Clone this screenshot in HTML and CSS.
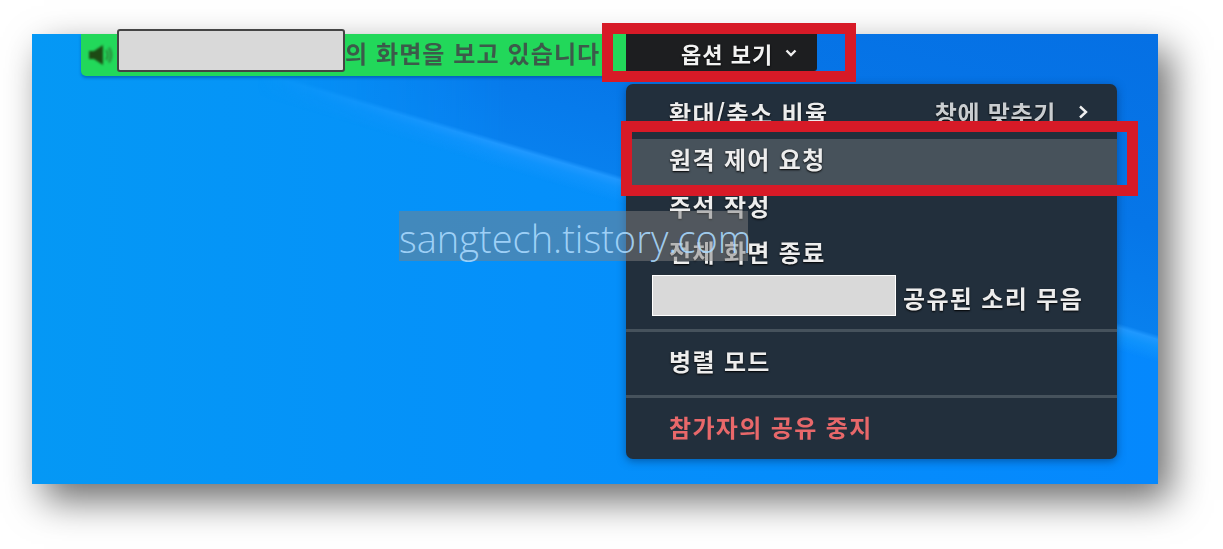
FILE: index.html
```html
<!DOCTYPE HTML>
<html lang="ko">
<head>
<meta charset="UTF-8">
<title>원격 제어 요청</title>
<link rel="stylesheet" href="styles.css">
</head>
<body>
<div class="desktop">
	<div class="topbar">
		<div class="share_bar">
			<svg class="speaker" viewBox="0 0 25 20" width="25" height="20">
				<path d="M1 6h5l9-6v20l-9-6H1z" fill="#1D4A14"/>
				<path d="M18 5c2 3 2 7 0 10M21 2.500c3 5 3 10 0 15" fill="none" stroke="#2A8A3C" stroke-width="2.200"/>
			</svg>
			<div class="mask mask_dark"></div>
			<span class="share_text">의 화면을 보고 있습니다</span>
		</div>
		<div class="view_btn">
			<span class="btn_text">옵션 보기</span>
			<svg class="btn_arrow" viewBox="0 0 12 8" width="12" height="8">
				<path d="M1.500 1.500 6 6l4.500-4.500" fill="none" stroke="#EEE" stroke-width="2.400"/>
			</svg>
		</div>
	</div>
	<ul class="menu">
		<li class="row">
			<span>확대/축소 비율</span>
			<span class="row_right">창에 맞추기
				<svg class="row_arrow" viewBox="0 0 10 14" width="10" height="14">
					<path d="M2 1.500 8 7l-6 5.500" fill="none" stroke="#F0F0F0" stroke-width="2.400"/>
				</svg>
			</span>
		</li>
		<li class="row row_on"><span>원격 제어 요청</span></li>
		<li class="row"><span>주석 작성</span></li>
		<li class="row"><span>전체 화면 종료</span></li>
		<li class="row row_mask">
			<div class="mask mask_light"></div>
			<span>공유된 소리 무음</span>
		</li>
		<li class="line"></li>
		<li class="row"><span>병렬 모드</span></li>
		<li class="line line_last"></li>
		<li class="row row_stop"><span>참가자의 공유 중지</span></li>
	</ul>
	<div class="frame frame_btn"></div>
	<div class="frame frame_row"></div>
	<div class="watermark">sangtech.tistory.com</div>
</div>
</body>
</html>
```

FILE: styles.css
```css
html, body, div, ul, li { margin:0; padding:0; }
ul li { list-style:none; }
body { width:1223px; height:549px; overflow:hidden; background:#FFF; font:bold 24px "Noto Sans CJK KR","Noto Sans",sans-serif; }

.desktop { position:relative; isolation:isolate; width:1126px; height:450px; margin:34px 0 0 32px; box-shadow:12px 16px 36px rgba(0,0,0,.58); background:linear-gradient(90deg, #0598F5 0%, #0590FA 45%, #0588FD 100%); }
/* wallpaper: darker blue above the light streak, fades out to the left */
.desktop::before { content:""; position:absolute; top:0; right:0; bottom:0; left:0; z-index:-1;
	background:linear-gradient(196.5deg, #0570E4 0%, #0676E8 25%, #0880EE 38.4%, #1F98FF 39%, #1093FC 40%, rgba(5,140,250,0) 42%);
	-webkit-mask-image:linear-gradient(90deg, transparent 20%, #000 42%);
	mask-image:linear-gradient(90deg, transparent 20%, #000 42%);
}

.topbar { display:flex; align-items:flex-start; margin-left:49px; }
.share_bar { display:flex; align-items:center; width:545px; height:42px; padding-left:7px; box-sizing:border-box; background:#22D85A; border-radius:0 0 0 5px; box-shadow:0 2px 3px rgba(0,50,120,.4); }
.speaker { flex:none; filter:blur(.8px); }
.share_text { margin-bottom:5px; color:#3C5A4A; letter-spacing:1.1px; white-space:nowrap; filter:blur(.7px); }
.view_btn { position:relative; display:flex; align-items:center; width:191px; height:37px; padding-left:55px; box-sizing:border-box; background:#1D1E20; color:#F2F2F2; border-radius:0 0 3px 0; font-size:22px; }
.btn_text { letter-spacing:1px; filter:blur(.6px); text-shadow:0 1px 2px #000; }
.btn_arrow { margin-left:12px; filter:blur(.4px); }

.mask { flex:none; box-sizing:border-box; background:#D9D9D9; }
.mask_dark { align-self:flex-start; width:228px; height:43px; margin:-5px 0 0 4px; border:2px solid #444; border-radius:3px; }
.mask_light { width:244px; height:41px; margin:0 7px 4px -17px; border:1px solid #FFF; box-shadow:0 0 1px #333; }

.menu { width:491px; height:375px; margin:8px 0 0 594px; padding-top:5px; box-sizing:border-box; background:#222F3C; border-radius:7px; box-shadow:0 2px 8px rgba(0,40,90,.5); color:#EDEDED; }
.row { display:flex; align-items:center; justify-content:space-between; height:46.5px; padding:0 29px 0 43px; letter-spacing:1.35px; white-space:nowrap; }
.row span { filter:blur(.6px); text-shadow:0 1px 2px #000; }
.row_right { display:flex; align-items:center; color:#C9CDD0; letter-spacing:.7px; }
.row_arrow { margin-left:22px; }
.row_on { background:linear-gradient(#222F3C 3px, #47525B 3px); box-shadow:0 3px 0 #47525B; }
.row_mask { justify-content:flex-start; height:44px; }
.row_stop { color:#E8686A; }
.row_stop span { text-shadow:none; }
.line { height:3px; margin:10px 0 5px; background:#46525C; filter:blur(.5px); }
.line_last { margin:11px 0 6px; }

.frame { position:absolute; box-sizing:border-box; border:11px solid #D71A27; }
.frame_btn { top:-11px; left:570px; width:254px; height:59px; }
.frame_row { top:87px; left:589px; width:517px; height:75px; }

.watermark { position:absolute; top:177px; left:367px; width:349px; height:50px; background:rgba(128,128,128,.5); color:rgba(170,218,255,.9); font:300 38px/54px "Open Sans",sans-serif; white-space:nowrap; }
```
